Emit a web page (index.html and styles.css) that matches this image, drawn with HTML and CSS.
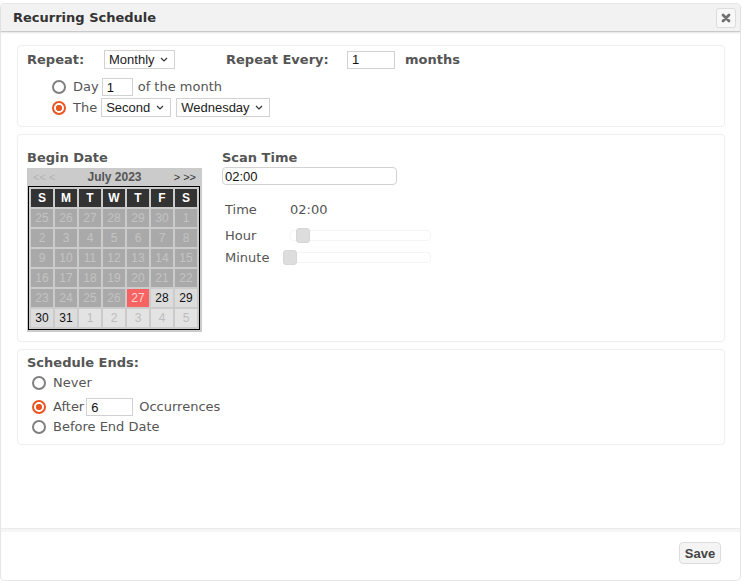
FILE: index.html
```html
<!DOCTYPE html>
<html lang="en">
  <head>
    <meta charset="UTF-8" />
    <meta name="viewport" content="width=device-width, initial-scale=1.0" />
    <title>Recurring Schedule</title>
    <link rel="stylesheet" href="styles.css">
  </head>

  <body>
    <div class="modal">
      <div class="modal__header">
        <h3 class="modal__title">Recurring Schedule</h3>
        <button class="modal__close" type="button" aria-label="Close">
          <svg width="10" height="10" viewBox="0 0 10 10">
            <path d="M2 2 L8 8 M8 2 L2 8" stroke="#707070" stroke-width="2.8" stroke-linecap="round" />
          </svg>
        </button>
      </div>

      <div class="modal__body">
        <!-- repeat -->
        <div class="panel panel--repeat">
          <div class="row">
            <span class="label label--repeat">Repeat:</span>
            <span class="pick pick--freq">
              <select class="select">
                <option>Monthly</option>
              </select>
              <svg class="pick__arrow" width="8" height="5" viewBox="0 0 8 5"><path d="M1 1 L4 4 L7 1" fill="none" stroke="#333" stroke-width="1.2" /></svg>
            </span>
            <span class="label label--every">Repeat Every:</span>
            <input class="input input--every" type="text" value="1" />
            <span class="label label--unit">months</span>
          </div>
          <div class="row row--day">
            <input class="radio" type="radio" name="monthly" />
            <span class="text text--day">Day</span>
            <input class="input input--day" type="text" value="1" />
            <span class="text text--month">of the month</span>
          </div>
          <div class="row row--the">
            <input class="radio" type="radio" name="monthly" checked />
            <span class="text text--the">The</span>
            <span class="pick pick--nth">
              <select class="select">
                <option>Second</option>
              </select>
              <svg class="pick__arrow" width="8" height="5" viewBox="0 0 8 5"><path d="M1 1 L4 4 L7 1" fill="none" stroke="#333" stroke-width="1.2" /></svg>
            </span>
            <span class="pick pick--weekday">
              <select class="select">
                <option>Wednesday</option>
              </select>
              <svg class="pick__arrow" width="8" height="5" viewBox="0 0 8 5"><path d="M1 1 L4 4 L7 1" fill="none" stroke="#333" stroke-width="1.2" /></svg>
            </span>
          </div>
        </div>

        <!-- begin date / scan time -->
        <div class="panel panel--when">
          <div class="col col--date">
            <div class="label">Begin Date</div>
            <div class="cal">
              <div class="cal__nav">
                <span class="cal__prev">&lt;&lt; &lt;</span>
                <span class="cal__title">July 2023</span>
                <span class="cal__next">&gt; &gt;&gt;</span>
              </div>
              <table class="cal__grid">
                <tr class="cal__head"><th>S</th><th>M</th><th>T</th><th>W</th><th>T</th><th>F</th><th>S</th></tr>
                <tr><td class="off">25</td><td class="off">26</td><td class="off">27</td><td class="off">28</td><td class="off">29</td><td class="off">30</td><td class="off">1</td></tr>
                <tr><td class="off">2</td><td class="off">3</td><td class="off">4</td><td class="off">5</td><td class="off">6</td><td class="off">7</td><td class="off">8</td></tr>
                <tr><td class="off">9</td><td class="off">10</td><td class="off">11</td><td class="off">12</td><td class="off">13</td><td class="off">14</td><td class="off">15</td></tr>
                <tr><td class="off">16</td><td class="off">17</td><td class="off">18</td><td class="off">19</td><td class="off">20</td><td class="off">21</td><td class="off">22</td></tr>
                <tr><td class="off">23</td><td class="off">24</td><td class="off">25</td><td class="off">26</td><td class="today">27</td><td>28</td><td>29</td></tr>
                <tr><td>30</td><td>31</td><td class="next">1</td><td class="next">2</td><td class="next">3</td><td class="next">4</td><td class="next">5</td></tr>
              </table>
            </div>
          </div>

          <div class="col col--time">
            <div class="label">Scan Time</div>
            <input class="input input--time" type="text" value="02:00" />
            <dl class="picker">
              <div class="picker__row">
                <dt>Time</dt>
                <dd>02:00</dd>
              </div>
              <div class="picker__row picker__row--hour">
                <dt>Hour</dt>
                <dd><div class="slider"><span class="slider__handle slider__handle--hour"></span></div></dd>
              </div>
              <div class="picker__row">
                <dt>Minute</dt>
                <dd><div class="slider"><span class="slider__handle slider__handle--minute"></span></div></dd>
              </div>
            </dl>
          </div>
        </div>

        <!-- ends -->
        <div class="panel panel--ends">
          <div class="label">Schedule Ends:</div>
          <div class="row row--never">
            <input class="radio" type="radio" name="ends" />
            <span class="text">Never</span>
          </div>
          <div class="row row--after">
            <input class="radio" type="radio" name="ends" checked />
            <span class="text text--after">After</span>
            <input class="input input--count" type="text" value="6" />
            <span class="text text--occ">Occurrences</span>
          </div>
          <div class="row row--before">
            <input class="radio" type="radio" name="ends" />
            <span class="text">Before End Date</span>
          </div>
        </div>
      </div>

      <div class="modal__footer">
        <button class="btn" type="button">Save</button>
      </div>
    </div>
  </body>
</html>
```

FILE: styles.css
```css
body {
  margin: 0;
  font-family: "DejaVu Sans", sans-serif;
  font-size: 13px;
  color: #555;
  background: #fff;
}

.modal {
  box-sizing: border-box;
  margin-top: 3px;
  width: 741px;
  height: 578px;
  border: 1px solid #e6e6e6;
  border-radius: 4px;
  display: flex;
  flex-direction: column;
}

.modal__header {
  height: 27px;
  display: flex;
  align-items: center;
  justify-content: space-between;
  padding: 0 4px 0 12px;
  background-color: #f2f2f2;
  border-bottom: 1px solid #c9c9c9;
  border-radius: 4px 4px 0 0;
  box-shadow: 0 1px 2px rgba(0, 0, 0, 0.1);
}

.modal__title {
  margin: 0;
  font-size: 13px;
  font-weight: bold;
  color: #333;
}

.modal__close {
  width: 20px;
  height: 20px;
  padding: 0;
  display: flex;
  align-items: center;
  justify-content: center;
  background-color: #f8f8f8;
  border: 1px solid #dcdcdc;
  border-radius: 3px;
}

.modal__body {
  flex: 1;
  padding: 13px 15px 0 16px;
}

.modal__footer {
  height: 52px;
  display: flex;
  justify-content: flex-end;
  align-items: flex-start;
  padding: 13px 19px 0 0;
  box-sizing: border-box;
  border-top: 1px solid #ececec;
  box-shadow: inset 0 3px 0 #f6f6f6;
}

.btn {
  width: 42px;
  height: 22px;
  padding: 0;
  font-family: "Liberation Sans", Arial, sans-serif;
  font-size: 13px;
  font-weight: bold;
  color: #444;
  background-color: #f4f4f4;
  border: 1px solid #dcdcdc;
  border-radius: 4px;
}

/* panels */
.panel {
  border: 1px solid #efefef;
  border-radius: 4px;
  box-shadow: 0 0 2px rgba(0, 0, 0, 0.04);
}
.panel + .panel {
  margin-top: 7px;
}

.panel--repeat {
  padding: 4px 9px 9px 9px;
}
.panel--when {
  display: flex;
  padding: 15px 9px 9px 9px;
}
.panel--ends {
  padding: 5px 9px 9px 9px;
}

.row {
  display: flex;
  align-items: center;
}

.label {
  font-weight: bold;
  line-height: 16px;
}

.text {
  line-height: 16px;
}

.label--repeat {
  width: 77px;
}
.label--every {
  width: 121px;
  margin-left: 51px;
}
.label--unit {
  margin-left: 10px;
}

.row--day {
  margin-top: 9px;
  padding-left: 25px;
}
.row--the {
  margin-top: 2px;
  padding-left: 25px;
}

.radio {
  appearance: none;
  -webkit-appearance: none;
  box-sizing: border-box;
  width: 14px;
  height: 14px;
  margin: 0 7px 0 0;
  border: 2px solid #808080;
  border-radius: 50%;
  background-color: #fff;
}
.radio:checked {
  border-color: #e9561f;
  background: radial-gradient(circle, #e9561f 0 2.8px, #fff 3.4px);
}

.text--day {
  margin-right: 3px;
}
.text--month {
  margin-left: 5px;
}
.text--the {
  margin-right: 4px;
}

/* select with chevron */
.pick {
  position: relative;
  display: inline-flex;
}
.pick--freq {
  width: 71px;
}
.pick--nth {
  width: 70px;
}
.pick--weekday {
  width: 94px;
  margin-left: 5px;
}

.select {
  appearance: none;
  -webkit-appearance: none;
  box-sizing: border-box;
  width: 100%;
  height: 19px;
  padding: 0 0 0 4px;
  font-family: "Liberation Sans", Arial, sans-serif;
  font-size: 13px;
  color: #222;
  background-color: #fff;
  border: 1px solid #d2d2d2;
  border-radius: 0;
}

.pick__arrow {
  position: absolute;
  right: 7px;
  top: 7px;
  pointer-events: none;
}

.input {
  box-sizing: border-box;
  height: 18px;
  padding: 0 4px;
  font-family: "Liberation Sans", Arial, sans-serif;
  font-size: 13px;
  color: #111;
  border: 1px solid #d2d2d2;
  border-radius: 0;
}
.input--every {
  width: 48px;
}
.input--day {
  width: 31px;
}
.input--count {
  width: 47px;
  margin-left: 2px;
}
.input--time {
  display: block;
  width: 175px;
  margin-top: 1px;
  padding: 0 2px;
  border-radius: 4px;
}

/* calendar */
.col--date {
  width: 195px;
}
.col--time {
  width: 220px;
}

.cal {
  width: 175px;
  margin-top: 2px;
  padding: 0 1px 2px 1px;
  box-sizing: border-box;
  background-color: #cbcbcb;
  font-family: "Liberation Sans", Arial, sans-serif;
}

.cal__nav {
  height: 18px;
  display: flex;
  align-items: center;
  justify-content: space-between;
  padding: 0 5px;
  font-size: 11px;
}
.cal__prev {
  color: #b3b3b3;
}
.cal__title {
  font-size: 12px;
  font-weight: bold;
  color: #555;
}
.cal__next {
  color: #333;
}

.cal__grid {
  border: 1px solid #000;
  border-spacing: 2px;
}
.cal__grid th,
.cal__grid td {
  width: 22px;
  height: 18px;
  padding: 0;
  text-align: center;
  font-size: 12px;
  color: #111;
  background-color: #dcdcdc;
}
.cal__grid th {
  font-weight: bold;
  color: #fff;
  background-color: #333;
}
.cal__grid td.off {
  color: #c3c3c3;
  background-color: #a9a9a9;
}
.cal__grid td.today {
  color: #ffd6d6;
  background-color: #f76262;
}
.cal__grid td.next {
  color: #bdbdbd;
  background-color: #e3e3e3;
}

/* time picker */
.picker {
  margin: 16px 0 0 3px;
}
.picker__row {
  display: flex;
  align-items: center;
  height: 16px;
  margin-top: 6px;
}
.picker__row:first-child {
  margin-top: 0;
}
.picker__row--hour {
  margin-top: 10px;
}
.picker dt {
  width: 65px;
}
.picker dd {
  margin: 0;
}

.slider {
  position: relative;
  box-sizing: border-box;
  width: 141px;
  height: 11px;
  border: 1px solid #f5f5f5;
  border-radius: 4px;
}
.slider__handle {
  position: absolute;
  top: -3px;
  width: 14px;
  height: 15px;
  box-sizing: border-box;
  background-color: #dddddd;
  border: 1px solid #d6d6d6;
  border-radius: 3px;
}
.slider__handle--hour {
  left: 5px;
}
.slider__handle--minute {
  left: -8px;
}

/* ends */
.row--never,
.row--after,
.row--before {
  padding-left: 5px;
}
.row--never {
  margin-top: 4px;
}
.row--after {
  margin-top: 7px;
}
.row--before {
  margin-top: 3px;
}
.text--occ {
  margin-left: 6px;
}
```
